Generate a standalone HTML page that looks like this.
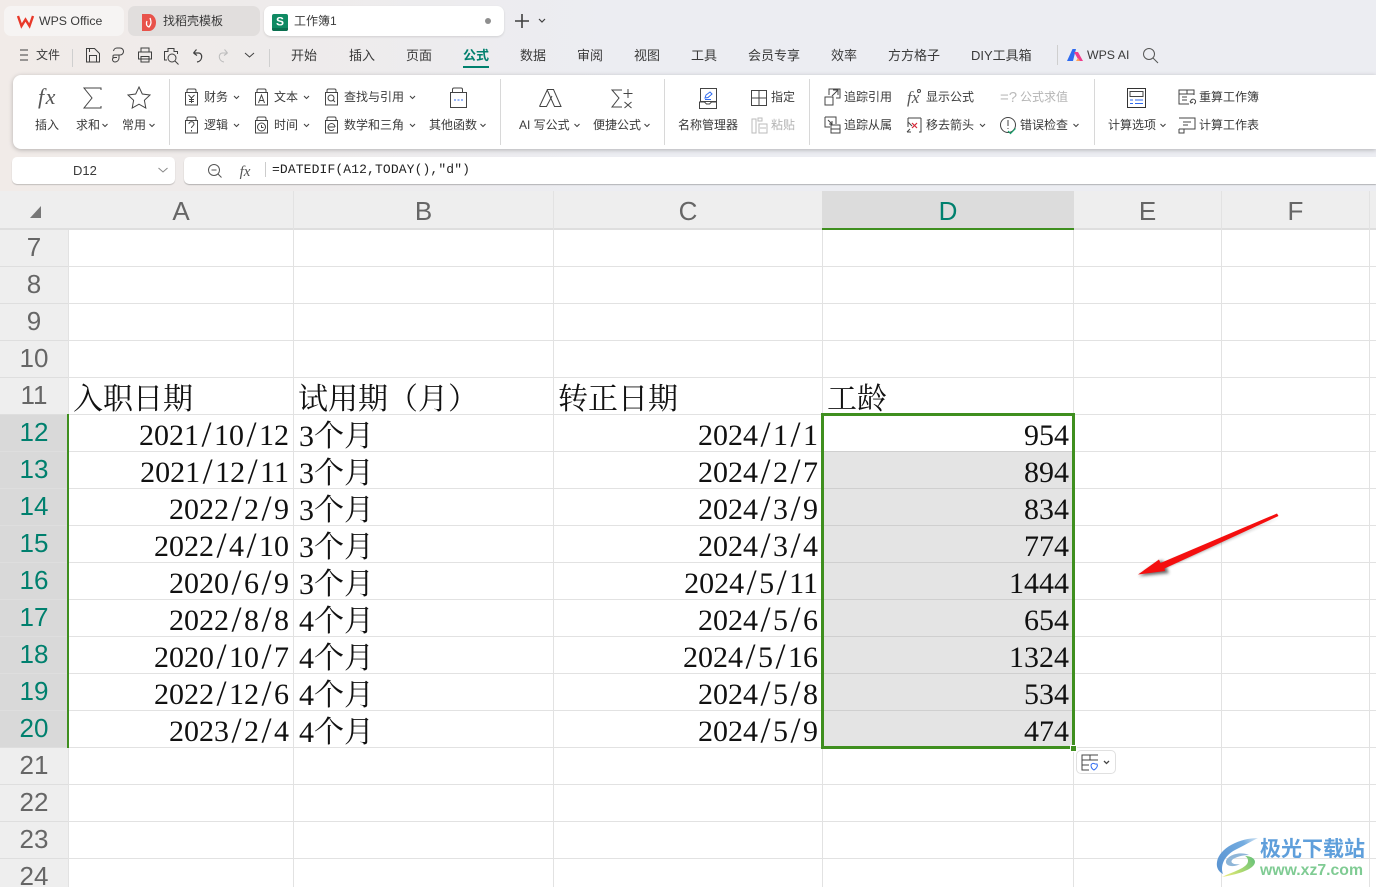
<!DOCTYPE html>
<html lang="zh"><head><meta charset="utf-8"><title>工作簿1</title>
<style>
html,body{margin:0;padding:0;width:1376px;height:887px;overflow:hidden;background:#fff}
body{position:relative;font-family:"Liberation Sans","Noto Sans CJK SC",sans-serif;color:#333}
div{box-sizing:border-box}
.a{position:absolute}
.t{position:absolute;white-space:nowrap;font-size:12px;line-height:16px;color:#3a3a3a}
.m{position:absolute;white-space:nowrap;font-size:13px;line-height:18px;top:47px;color:#3a3a3a}
.g{color:#b4b4b4}
.ch{position:absolute;top:192px;height:38px;line-height:38px;font-size:26px;text-align:center;color:#666}
.rh{position:absolute;left:0;width:68px;height:37px;line-height:35px;font-size:26px;text-align:center;color:#666;background:#eee;border-bottom:1px solid #dedede}
.rs{background:#d9d9d9;color:#00806e}
.n,.c{position:absolute;white-space:nowrap;font-family:"Liberation Serif","Noto Serif CJK SC",serif;font-size:30px;line-height:37px;color:#111;height:37px}
.n{text-align:right;margin-top:-1px}
.n i{display:inline-block;width:15px;text-align:center;font-style:normal;font-size:36px;line-height:0;vertical-align:-1px}
</style></head>
<body>
<div class="a" style="left:0;top:0;width:1376px;height:191px;background:linear-gradient(90deg,#f1ebe8 0,#eeebeb 280px,#ecedf2 620px,#ecedf2 100%)"></div>

<div class="a" style="left:4px;top:6px;width:120px;height:30px;background:#f6f4f3;border-radius:7px"></div>
<div class="a" style="left:128px;top:6px;width:132px;height:30px;background:#e1dedd;border-radius:7px"></div>
<div class="a" style="left:264px;top:6px;width:240px;height:30px;background:#fff;border-radius:7px;box-shadow:0 1px 2px rgba(0,0,0,.12)"></div>
<div class="t" style="left:39px;top:13px;font-size:12.300px">WPS Office</div>
<div class="t" style="left:163px;top:13px">找稻壳模板</div>
<div class="t" style="left:294px;top:13px">工作簿1</div>

<div class="t" style="left:36px;top:47px">文件</div>
<div class="m" style="left:291px">开始</div>
<div class="m" style="left:349px">插入</div>
<div class="m" style="left:406px">页面</div>
<div class="m" style="left:463px;color:#00806e;font-weight:700">公式</div>
<div class="a" style="left:463px;top:66px;width:26px;height:2px;background:#00806e"></div>
<div class="m" style="left:520px">数据</div>
<div class="m" style="left:577px">审阅</div>
<div class="m" style="left:634px">视图</div>
<div class="m" style="left:691px">工具</div>
<div class="m" style="left:748px">会员专享</div>
<div class="m" style="left:831px">效率</div>
<div class="m" style="left:888px">方方格子</div>
<div class="m" style="left:971px">DIY工具箱</div>
<div class="t" style="left:1087px;top:47px;font-size:12.300px">WPS AI</div>

<div class="a" style="left:13px;top:75px;width:1363px;height:74px;background:#fff;border-radius:8px 0 0 8px;box-shadow:0 1px 5px rgba(0,0,0,.25)"></div>

<div class="t" style="left:35px;top:117px">插入</div>
<div class="t" style="left:76px;top:117px">求和</div>
<div class="t" style="left:122px;top:117px">常用</div>
<div class="t" style="left:204px;top:89px">财务</div>
<div class="t" style="left:204px;top:117px">逻辑</div>
<div class="t" style="left:274px;top:89px">文本</div>
<div class="t" style="left:274px;top:117px">时间</div>
<div class="t" style="left:344px;top:89px">查找与引用</div>
<div class="t" style="left:344px;top:117px">数学和三角</div>
<div class="t" style="left:429px;top:117px">其他函数</div>
<div class="t" style="left:519px;top:117px">AI 写公式</div>
<div class="t" style="left:593px;top:117px">便捷公式</div>
<div class="t" style="left:678px;top:117px">名称管理器</div>
<div class="t" style="left:771px;top:89px">指定</div>
<div class="t g" style="left:771px;top:117px">粘贴</div>
<div class="t" style="left:844px;top:89px">追踪引用</div>
<div class="t" style="left:844px;top:117px">追踪从属</div>
<div class="t" style="left:926px;top:89px">显示公式</div>
<div class="t" style="left:926px;top:117px">移去箭头</div>
<div class="t g" style="left:1020px;top:89px">公式求值</div>
<div class="t" style="left:1020px;top:117px">错误检查</div>
<div class="t" style="left:1108px;top:117px">计算选项</div>
<div class="t" style="left:1199px;top:89px">重算工作簿</div>
<div class="t" style="left:1199px;top:117px">计算工作表</div>

<div class="a" style="left:12px;top:157px;width:163px;height:27px;background:#fff;border-radius:5px;box-shadow:0 1px 1px rgba(0,0,0,.2)"></div>
<div class="a" style="left:184px;top:157px;width:1192px;height:27px;background:#fff;border-radius:5px 0 0 5px;box-shadow:0 1px 1px rgba(0,0,0,.25)"></div>
<div class="t" style="left:73px;top:163px;font-size:13px">D12</div>
<div class="t" style="left:272px;top:162px;font-family:'Liberation Mono',monospace;font-size:13px;letter-spacing:.12px;color:#222">=DATEDIF(A12,TODAY(),"d")</div>

<div class="a" style="left:0;top:191px;width:1376px;height:39px;background:#eee;border-bottom:2px solid #dedede"></div>
<div class="a" style="left:822px;top:191px;width:252px;height:39px;background:#dcdcdc;border-bottom:2px solid #3f8f1f"></div>
<div class="ch" style="left:69px;width:224px">A</div>
<div class="ch" style="left:294px;width:259px">B</div>
<div class="ch" style="left:554px;width:268px">C</div>
<div class="ch" style="left:823px;width:250px;color:#00806e">D</div>
<div class="ch" style="left:1074px;width:147px">E</div>
<div class="ch" style="left:1222px;width:147px">F</div>

<div class="rh" style="top:230px">7</div>
<div class="rh" style="top:267px">8</div>
<div class="rh" style="top:304px">9</div>
<div class="rh" style="top:341px">10</div>
<div class="rh" style="top:378px">11</div>
<div class="rh rs" style="top:415px">12</div>
<div class="rh rs" style="top:452px">13</div>
<div class="rh rs" style="top:489px">14</div>
<div class="rh rs" style="top:526px">15</div>
<div class="rh rs" style="top:563px">16</div>
<div class="rh rs" style="top:600px">17</div>
<div class="rh rs" style="top:637px">18</div>
<div class="rh rs" style="top:674px">19</div>
<div class="rh rs" style="top:711px">20</div>
<div class="rh" style="top:748px">21</div>
<div class="rh" style="top:785px">22</div>
<div class="rh" style="top:822px">23</div>
<div class="rh" style="top:859px">24</div>

<div class="a" style="left:823px;top:452px;width:250px;height:296px;background:#e4e4e4"></div>

<svg class="a" style="left:0;top:0" width="1376" height="887" viewBox="0 0 1376 887" fill="none">
<g stroke="#e2e2e2" stroke-width="1" shape-rendering="crispEdges">
<path d="M68.5 230V887M293.5 191V887M553.5 191V887M822.5 230V887M1073.5 230V887M1221.5 191V887M1369.5 191V887"/>
<path d="M69 266.500H1376M69 303.500H1376M69 340.500H1376M69 377.500H1376M69 414.500H1376M69 451.500H1376M69 488.500H1376M69 525.500H1376M69 562.500H1376M69 599.500H1376M69 636.500H1376M69 673.500H1376M69 710.500H1376M69 747.500H1376M69 784.500H1376M69 821.500H1376M69 858.500H1376"/>
</g>
<g stroke="#cfcfcf" stroke-width="1" shape-rendering="crispEdges"><path d="M823 488.500H1073M823 525.500H1073M823 562.500H1073M823 599.500H1073M823 636.500H1073M823 673.500H1073M823 710.500H1073M823 451.500H1073"/></g>
</svg>

<div class="c" style="left:73px;top:381px">入职日期</div>
<div class="c" style="left:298px;top:381px">试用期（月）</div>
<div class="c" style="left:558px;top:381px">转正日期</div>
<div class="c" style="left:827px;top:381px">工龄</div>

<div class="n" style="right:1087px;top:418px">2021<i>/</i>10<i>/</i>12</div>
<div class="n" style="right:1087px;top:455px">2021<i>/</i>12<i>/</i>11</div>
<div class="n" style="right:1087px;top:492px">2022<i>/</i>2<i>/</i>9</div>
<div class="n" style="right:1087px;top:529px">2022<i>/</i>4<i>/</i>10</div>
<div class="n" style="right:1087px;top:566px">2020<i>/</i>6<i>/</i>9</div>
<div class="n" style="right:1087px;top:603px">2022<i>/</i>8<i>/</i>8</div>
<div class="n" style="right:1087px;top:640px">2020<i>/</i>10<i>/</i>7</div>
<div class="n" style="right:1087px;top:677px">2022<i>/</i>12<i>/</i>6</div>
<div class="n" style="right:1087px;top:714px">2023<i>/</i>2<i>/</i>4</div>

<div class="c" style="left:299px;top:418px">3个月</div>
<div class="c" style="left:299px;top:455px">3个月</div>
<div class="c" style="left:299px;top:492px">3个月</div>
<div class="c" style="left:299px;top:529px">3个月</div>
<div class="c" style="left:299px;top:566px">3个月</div>
<div class="c" style="left:299px;top:603px">4个月</div>
<div class="c" style="left:299px;top:640px">4个月</div>
<div class="c" style="left:299px;top:677px">4个月</div>
<div class="c" style="left:299px;top:714px">4个月</div>

<div class="n" style="right:558px;top:418px">2024<i>/</i>1<i>/</i>1</div>
<div class="n" style="right:558px;top:455px">2024<i>/</i>2<i>/</i>7</div>
<div class="n" style="right:558px;top:492px">2024<i>/</i>3<i>/</i>9</div>
<div class="n" style="right:558px;top:529px">2024<i>/</i>3<i>/</i>4</div>
<div class="n" style="right:558px;top:566px">2024<i>/</i>5<i>/</i>11</div>
<div class="n" style="right:558px;top:603px">2024<i>/</i>5<i>/</i>6</div>
<div class="n" style="right:558px;top:640px">2024<i>/</i>5<i>/</i>16</div>
<div class="n" style="right:558px;top:677px">2024<i>/</i>5<i>/</i>8</div>
<div class="n" style="right:558px;top:714px">2024<i>/</i>5<i>/</i>9</div>

<div class="n" style="right:307px;top:418px">954</div>
<div class="n" style="right:307px;top:455px">894</div>
<div class="n" style="right:307px;top:492px">834</div>
<div class="n" style="right:307px;top:529px">774</div>
<div class="n" style="right:307px;top:566px">1444</div>
<div class="n" style="right:307px;top:603px">654</div>
<div class="n" style="right:307px;top:640px">1324</div>
<div class="n" style="right:307px;top:677px">534</div>
<div class="n" style="right:307px;top:714px">474</div>

<div class="a" style="left:821px;top:413px;width:254px;height:336px;border:3px solid #3f8f1f"></div>
<div class="a" style="left:67px;top:414px;width:2px;height:334px;background:#3f8f1f"></div>
<div class="a" style="left:1070px;top:745px;width:7px;height:7px;background:#3f8f1f;border:1px solid #fff"></div>
<div class="a" style="left:1076px;top:750px;width:40px;height:24px;background:#fff;border:1px solid #e0e0e0;border-radius:5px"></div>

<svg class="a" style="left:0;top:0" width="1376" height="887" viewBox="0 0 1376 887" fill="none" stroke="#3f3f3f" stroke-width="1">
<defs>
<filter id="sh" x="-20%" y="-20%" width="140%" height="150%"><feGaussianBlur stdDeviation="1.600"/></filter>
<linearGradient id="lb" gradientUnits="userSpaceOnUse" x1="1217" y1="865" x2="1258" y2="838"><stop offset="0" stop-color="#5b95d2"/><stop offset=".7" stop-color="#74ace0"/><stop offset="1" stop-color="#d5e6f4"/></linearGradient>
<linearGradient id="lg" gradientUnits="userSpaceOnUse" x1="1222" y1="877" x2="1256" y2="858"><stop offset="0" stop-color="#f0ea80"/><stop offset=".45" stop-color="#b6dc70"/><stop offset="1" stop-color="#62c07a"/></linearGradient>
</defs>
<!-- tabs -->
<path d="M18 16l3.500 10 4-6.500 4 6.500 3.500-10" stroke="#e8392a" stroke-width="2.400"/>
<path d="M142 14h7a7 8.500 0 0 1 0 17h-7z" fill="#e8524a" stroke="none"/>
<path d="M150 18c1 3 2 5-1 9-3-1-3-4-2-6" stroke="#fff" stroke-width="1.300"/>
<rect x="272" y="14" width="16" height="17" rx="2" fill="#0f8a63" stroke="none"/>
<path d="M272 28h16v1a2 2 0 0 1-2 2h-12a2 2 0 0 1-2-2z" fill="#0a6f4f" stroke="none"/>
<text x="280" y="25.500" text-anchor="middle" font-family="Liberation Sans" font-size="12" font-weight="700" fill="#fff" stroke="none">S</text>
<circle cx="488" cy="21" r="3" fill="#8e8e8e" stroke="none"/>
<path d="M522 14v14M515 21h14" stroke-width="1.600"/>
<path d="M539 19l3 3 3-3" stroke-width="1.200"/>
<!-- menu bar -->
<path d="M20 50h8M20 55h8M20 60h8"/>
<path d="M72.500 49v18M269.500 49v18M1057.500 45v20" stroke="#cfcfcf"/>
<path d="M86.500 48.500h8l5 5v8.500h-13zM89.500 62v-6.500h7v6.500M89.500 48.500v3.500"/>
<path d="M113 58v-2q0-1 1.500-1h5.500a3.500 3.500 0 0 0 0-7h-3a3.500 3.500 0 0 0-3.500 3M119 55v3a4 4 0 0 1-4 4 2.500 2.500 0 0 1-2.500-2.500q0-2 2.500-2h2"/>
<path d="M141 52v-4h8v4M138.500 52h13v7h-13zM141 56.500h8v5.500h-8z"/>
<path d="M167 60h-2.500v-8.500h3.500v-3h6v3h3.500v2.500M172 58m-4 0a4 4 0 1 0 8 0a4 4 0 1 0-8 0M175 61l3.500 3.500"/>
<path d="M193.500 53l3-3.500M193.500 53l3.500 2.500M193.500 53h5c4.500 0 4.500 8-1.500 9" stroke-width="1.200"/>
<path d="M227.500 53l-3-3.500M227.500 53l-3.500 2.500M227.500 53h-5c-4.500 0-4.500 8 1.500 9" stroke="#bdbdbd" stroke-width="1.100"/>
<path d="M245 53l4.500 4 4.500-4"/>
<path d="M1067 61l5.500-12h3.500l-3 12z" fill="#2f6bf0" stroke="none"/>
<path d="M1074 52l5 9h4l-5-9z" fill="#ef3d8c" stroke="none"/>
<path d="M1076 61l2-3 2 3z" fill="#ffa25a" stroke="none"/>
<circle cx="1149" cy="54" r="5.500" stroke="#555"/><path d="M1153 58l5 5" stroke="#555"/>
<!-- ribbon separators -->
<path d="M169.500 79v66M500.500 79v66M664.500 79v66M809.500 79v66M1094.500 79v66" stroke="#d8d8d8"/>
<!-- big -->
<text x="38" y="104" font-family="Liberation Serif" font-style="italic" font-size="22" letter-spacing="1.500" fill="#555" stroke="none">fx</text>
<path d="M101 90v-2H84l8 10-8 10h17v-2" stroke="#444"/>
<path d="M139 87l3.300 7 7.700 1-5.600 5.300 1.400 7.700-6.800-3.800-6.800 3.800 1.400-7.700L128 95l7.700-1z" stroke="#444"/>
<path d="M450.500 92.500h16v15h-16zM452.500 92.500v-3q0-1.500 1.500-1.500h7q1.500 0 1.500 1.500v3" stroke="#444"/>
<path d="M454 100h2M457.500 100h2M461 100h2" stroke="#2f6bf0"/>
<!-- small function icons -->
<g stroke="#444">
<path id="d1" d="M185.500 92.500h12v12.500h-12zM187 92.500v-2q0-1.500 1.500-1.500h6q1.500 0 1.500 1.500v2"/>
<use href="#d1" x="70"/><use href="#d1" x="140"/>
<use href="#d1" y="28"/><use href="#d1" x="70" y="28"/><use href="#d1" x="140" y="28"/>
<path d="M188.500 95l3 3 3-3M191.500 98v5M189 99.500h5M189 101.500h5"/>
<path d="M258.500 103l3-8 3 8M259.500 100.500h4"/>
<circle cx="331" cy="98" r="3"/><path d="M333 100l2 2"/>
<path d="M189 124c0-3 5-3 5 0 0 2-2.500 2-2.500 4M191.500 130v1.500"/>
<circle cx="261.500" cy="127" r="4"/><path d="M261.500 125v2.500h2"/>
<path d="M335 127a3.500 3.500 0 1 0-1 2.500M328 127h7"/>
</g>
<!-- chevrons -->
<g stroke="#444" stroke-width="1.100">
<path d="M102.500 124l2.500 2.500 2.500-2.500M149.500 124l2.500 2.500 2.500-2.500M234 96l2.500 2.500L239 96M304 96l2.500 2.500L309 96M410 96l2.500 2.500L415 96M234 124l2.500 2.500 2.500-2.500M304 124l2.500 2.500 2.500-2.500M410 124l2.500 2.500 2.500-2.500M480.500 124l2.500 2.500 2.500-2.500M574.500 124l2.500 2.500 2.500-2.500M644.500 124l2.500 2.500 2.500-2.500M980 124l2.500 2.500 2.500-2.500M1073.500 124l2.500 2.500 2.500-2.500M1160.500 124l2.500 2.500 2.500-2.500"/>
</g>
<!-- AI write / quick -->
<path d="M539.500 106.500l8-17h6l7.500 17h-6.500l-7.500-17M539.500 106.500h7l5.500-10.500" stroke="#444"/>
<path d="M622 90h-10l7 8-7 9h10" stroke="#444"/>
<path d="M628 89v9M623.500 93.500h9M624.500 102l7 6M631.500 102l-7 6" stroke="#444"/>
<!-- name manager -->
<path d="M700.500 88.500h16v13h-16z" stroke="#444"/>
<path d="M699.500 102v6.500h17v-6.500h-5l-2 2h-3l-2-2z" stroke="#444"/>
<path d="M705 98l1-3 4-3 2 2-4 3.500zM705 99.500h6" stroke="#2f6bf0"/>
<!-- define -->
<path d="M751.500 90.500h15v15h-15zM759 90.500v15M751.500 98h15M759 94.500" stroke="#444"/>
<path d="M752 119h4v14h-4zM758 118h4v3h-4zM759 124h8v9h-8zM760 128h6" stroke="#bbb"/>
<!-- trace -->
<path d="M829 95v-6h11v9h-4M825 97h8v8h-8zM838 90l-6 6M833 90h5v5" stroke="#444"/>
<path d="M825 117h11v7M825 117v10h5M828 120l4 4M832 121v3h-3M831 125h9v8h-9zM831 129h9" stroke="#444"/>
<text x="907" y="103" font-family="Liberation Serif" font-style="italic" font-size="17" fill="#555" stroke="none">fx</text>
<circle cx="919" cy="91" r="1.500" stroke="#444"/>
<path d="M908 118h13M908 118v9M921 118v14h-2M907 132l3-3M907 132h4M908 122l4 4" stroke="#444"/>
<path d="M912 123l5 5M917 123l-5 5" stroke="#d62b3a" stroke-width="1.200"/>
<text x="1000" y="102" font-family="Liberation Sans" font-size="15" fill="#bbb" stroke="none">=?</text>
<circle cx="1008" cy="125" r="7.500" stroke="#444"/>
<path d="M1008 120v6M1008 128v1" stroke="#444"/>
<path d="M1008 131l2.500 2.500 5-5" stroke="#16a06a" stroke-width="1.200"/>
<!-- calc -->
<rect x="1127.500" y="88.500" width="18" height="19" stroke="#333"/>
<path d="M1130 91.500h13v5h-13z" stroke="#444"/>
<path d="M1130 100h3M1135 100h8M1130 103.500h3M1135 103.500h8" stroke="#2f6bf0"/>
<path d="M1194 95v-5h-15v14h10M1179 94h15M1187 90v4M1182 97h5M1182 100h5" stroke="#444"/>
<path d="M1191 103a2.500 2.500 0 1 1 3 1M1190 101l1 2 2-1" stroke="#444"/>
<path d="M1179 118h16v11h-11v4h-5v-4M1183 122h8M1183 125h5M1179 129h5" stroke="#444"/>
<!-- formula bar -->
<path d="M158.500 168l4.500 4 4.500-4" stroke="#888"/>
<circle cx="214" cy="170" r="5.500" stroke="#555"/><path d="M211.500 170h5M218 174l3.500 3.500" stroke="#555"/>
<text x="245" y="176" text-anchor="middle" font-family="Liberation Serif" font-style="italic" font-size="15" fill="#555" stroke="none">fx</text>
<path d="M265.500 162v15" stroke="#ccc"/>
<!-- corner triangle -->
<path d="M41 206v12H30z" fill="#777" stroke="none"/>
<!-- paste options -->
<path d="M1098 755h-16v15h7M1082 760h16M1082 765h7M1090 755v5" stroke="#444"/>
<path d="M1091 765c1-2 3-2 4-1l2 0c1 2 0 4-3 6-2-1-3-3-3-5z" stroke="#2f6bf0"/>
<path d="M1104 761l2.500 2.500 2.500-2.500" stroke="#444" stroke-width="1.300"/>
<!-- arrow -->
<path d="M1279 517l-113 50 3 6-30 3 23-16 2 4z" fill="#333" stroke="none" opacity=".75" filter="url(#sh)"/>
<path d="M1277 513.500l1.500 2.500-114 52.500 0.500 2.500-27 3.500 21-15 1.500 3.500z" fill="#f40f0f" stroke="none"/>
<!-- watermark logo -->
<path d="M1258 838C1240 838 1219 848 1217 862C1216 868 1219 872 1223 874C1220 866 1224 856 1235 850C1243 846 1250 842 1258 838Z" fill="url(#lb)" stroke="none"/>
<path d="M1249 855C1240 851 1228 855 1226 861C1225 866 1233 868 1240 864C1234 865 1230 863 1232 860C1235 857 1243 855 1249 855Z" fill="#8fb6d8" stroke="none"/>
<path d="M1245 856C1253 856 1258 861 1253 866C1247 872 1233 875 1222 877C1232 872 1248 868 1248 861C1248 859 1247 857 1245 856Z" fill="url(#lg)" stroke="none"/>
</svg>
<div class="a" style="left:1260px;top:837px;font-size:21px;line-height:26px;font-weight:700;color:#5f9fdb;white-space:nowrap">极光下载站</div>
<div class="a" style="left:1260px;top:862px;font-size:15.800px;line-height:18px;font-weight:700;color:#7fcb93;white-space:nowrap">www.xz7.com</div>
</body></html>
